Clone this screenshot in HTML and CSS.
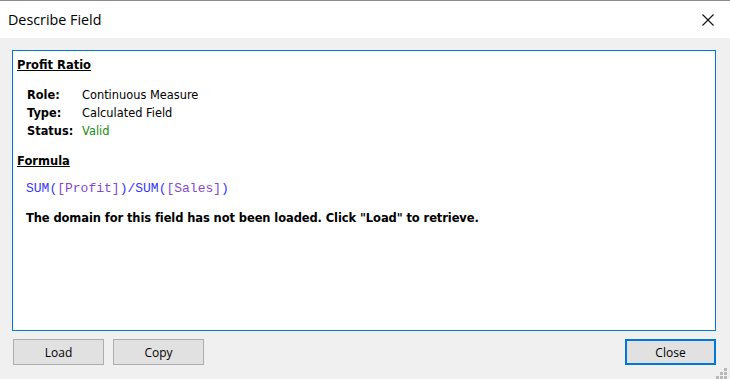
FILE: index.html
```html
<!DOCTYPE html>
<html lang="en">
<head>
  <meta charset="UTF-8" />
  <title>Describe Field</title>
  <link rel="stylesheet" href="styles.css">
</head>
<body>
  <div class="dialog">
    <div class="titlebar">
      <span class="title">Describe Field</span>
      <span class="close-x">
        <svg width="12" height="12" viewBox="0 0 12 12"><path d="M0.5 0.5 L11.5 11.5 M11.5 0.5 L0.5 11.5" stroke="#111" stroke-width="1.1" fill="none"/></svg>
      </span>
    </div>
    <div class="body">
      <div class="panel">
        <h3 class="heading">Profit Ratio</h3>
        <table class="props">
          <tr><td class="key">Role:</td><td>Continuous Measure</td></tr>
          <tr><td class="key">Type:</td><td>Calculated Field</td></tr>
          <tr><td class="key">Status:</td><td class="valid">Valid</td></tr>
        </table>
        <h3 class="heading">Formula</h3>
        <div class="formula">SUM(<span class="field">[Profit]</span>)/SUM(<span class="field">[Sales]</span>)</div>
        <p class="note">The domain for this field has not been loaded. Click "Load" to retrieve.</p>
      </div>
      <div class="buttons">
        <button class="btn">Load</button>
        <button class="btn">Copy</button>
        <span class="spacer"></span>
        <button class="btn default">Close</button>
      </div>
      <div class="grip">
        <svg width="12" height="12" viewBox="0 0 12 12" fill="#b8b8b8">
          <rect x="8" y="0" width="3" height="3"/>
          <rect x="4" y="4" width="3" height="3"/><rect x="8" y="4" width="3" height="3"/>
          <rect x="0" y="8" width="3" height="3"/><rect x="4" y="8" width="3" height="3"/><rect x="8" y="8" width="3" height="3"/>
        </svg>
      </div>
    </div>
  </div>
</body>
</html>
```
FILE: styles.css
```css
html, body {
  margin: 0;
  padding: 0;
}
body {
  width: 730px;
  height: 379px;
  overflow: hidden;
  background: #f0f0f0;
}
.dialog {
  height: 379px;
  display: flex;
  flex-direction: column;
  border-top: 1px solid #8a8a8a;
  box-sizing: border-box;
}
.titlebar {
  height: 37px;
  background: white;
  display: flex;
  align-items: center;
  justify-content: space-between;
  padding: 0 8px 0 8px;
  font-family: "Open Sans", "Noto Sans", sans-serif;
  font-size: 14.3px;
  color: #000;
}
.title {
  margin-top: -1px;
}
.close-x {
  width: 12px;
  height: 12px;
  margin-right: 8px;
  display: flex;
}
.body {
  flex: 1;
  position: relative;
  padding: 12px 14px 0 12px;
}
.panel {
  height: 281px;
  box-sizing: border-box;
  background: white;
  border: 1px solid #0078d7;
  padding: 6px 4px 5px;
  font-family: "DejaVu Sans", Verdana, sans-serif;
  font-size: 11.4px;
  color: #000;
}
.heading {
  margin: 0;
  font-size: 11.5px;
  font-weight: bold;
  text-decoration: underline;
  line-height: 16px;
}
.props {
  border-collapse: collapse;
  margin: 13px 0 13px 10px;
}
.props td {
  padding: 0;
  height: 18px;
  line-height: 18px;
}
.props .key {
  font-weight: bold;
  width: 55px;
}
.valid {
  color: #168a16;
}
.formula {
  margin: 12px 0 0 9px;
  font-family: "Liberation Mono", "Courier New", monospace;
  font-size: 13px;
  color: #3535ff;
  line-height: 16px;
}
.field {
  color: #8548d0;
}
.note {
  margin: 13px 0 0 9px;
  font-weight: bold;
  font-size: 11.5px;
  letter-spacing: -0.1px;
  line-height: 16px;
}
.buttons {
  display: flex;
  gap: 9px;
  margin-top: 8px;
  padding-left: 1px;
}
.spacer {
  flex: 1;
}
.btn {
  width: 91px;
  height: 26px;
  box-sizing: border-box;
  background: #e1e1e1;
  border: 1px solid #adadad;
  font-family: "Open Sans", "Noto Sans", sans-serif;
  font-size: 12px;
  color: #000;
  padding: 0;
}
.btn.default {
  border: 2px solid #0078d7;
}
.grip {
  position: absolute;
  right: 2px;
  bottom: 1px;
  width: 12px;
  height: 12px;
}
```
